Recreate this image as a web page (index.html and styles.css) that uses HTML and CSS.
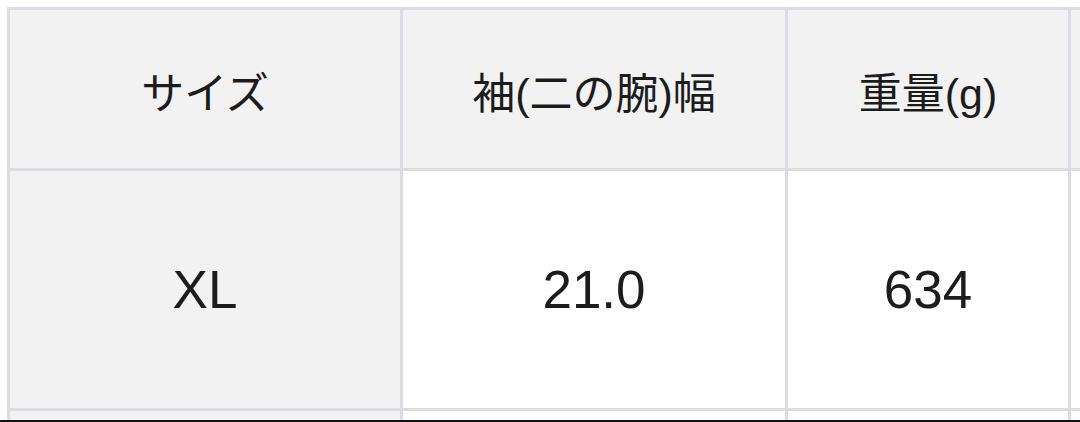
FILE: index.html
```html
<!DOCTYPE html>
<html lang="ja">
<head>
<meta charset="utf-8">
<link rel="stylesheet" href="styles.css">
</head>
<body>
<div class="frame">
  <div class="table">
    <div class="cell head">サイズ</div>
    <div class="cell head">袖(二の腕)幅</div>
    <div class="cell head">重量(g)</div>
    <div class="cell head"></div>
    <div class="cell label">XL</div>
    <div class="cell value">21.0</div>
    <div class="cell value">634</div>
    <div class="cell value"></div>
    <div class="cell label"></div>
    <div class="cell value"></div>
    <div class="cell value"></div>
    <div class="cell value"></div>
  </div>
</div>
</body>
</html>
```

FILE: styles.css
```css
html, body {
  margin: 0;
  padding: 0;
  background: #ffffff;
  overflow: hidden;
}
.frame {
  width: 1080px;
  height: 422px;
  overflow: hidden;
  border-bottom: 2px solid #111111;
  padding: 7px 0 0 7px;
  box-sizing: border-box;
}
.table {
  display: grid;
  grid-template-columns: 390px 382px 280px 200px;
  grid-template-rows: 158px 237px 40px;
  gap: 3px;
  padding: 3px;
  background: #dcdde3;
  width: max-content;
  font-family: "Liberation Sans", "Noto Sans CJK JP", sans-serif;
  color: #1c1c1c;
}
.cell {
  display: flex;
  align-items: center;
  justify-content: center;
}
.head {
  background: #f2f2f2;
  font-size: 43px;
  padding-top: 2px;
}
.label {
  background: #f2f2f2;
  font-size: 53px;
}
.value {
  background: #ffffff;
  font-size: 53px;
}
```
